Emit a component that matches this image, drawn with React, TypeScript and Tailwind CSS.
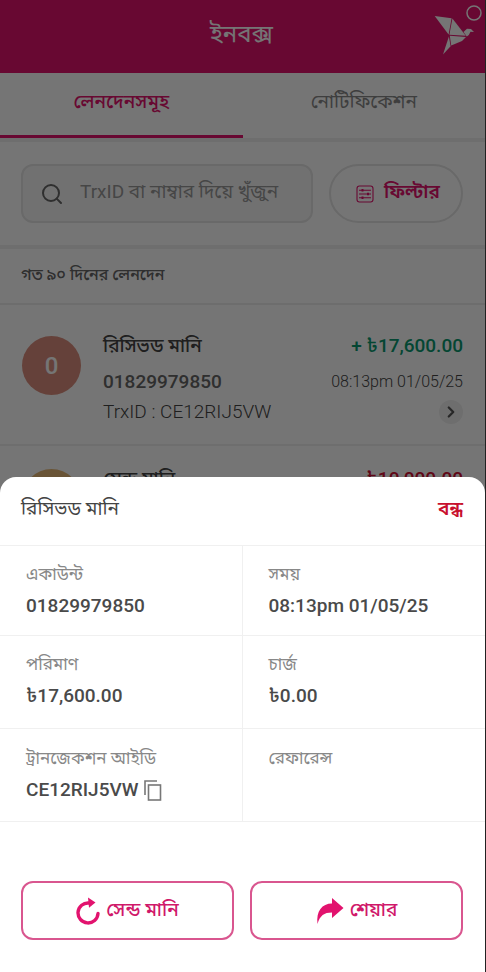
import { Search, ChevronRight } from "lucide-react";
import type { ReactNode } from "react";

function BirdLogo() {
  return (
    <svg viewBox="434 2 50 54" className="h-[54px] w-[50px]" fill="#fff" aria-hidden="true">
      <path d="M434.7 16 L451.6 18.2 L448.6 34.6 Z" />
      <path d="M452.4 18.5 L465.8 35.8 L449.4 34.8 Z" />
      <path d="M449.8 35.8 L466 37 L462 41 L451.2 45.6 Z" />
      <path d="M448.9 36.5 L450.6 46.2 L443 54.5 Z" />
      <path d="M463.5 32 L467 28.8 L471 29 L474 32 L470.5 31.8 L468.8 35 L466.8 36.6 Z" />
      <circle cx="474" cy="13" r="7" fill="none" stroke="#fff" strokeWidth="1.5" />
    </svg>
  );
}

function FilterIcon() {
  return (
    <svg viewBox="0 0 18 18" className="h-[18px] w-[18px]" fill="none" stroke="#E2136E" strokeWidth="1.1" aria-hidden="true">
      <rect x="1" y="1" width="16" height="16" rx="2.5" />
      <path d="M3 5.2h12M3 9h12M3 12.8h12" />
      <path d="M6.5 4v2.4M12 7.8v2.4M6.5 11.6v2.4" strokeWidth="2" />
    </svg>
  );
}

function RedoIcon() {
  return (
    <svg viewBox="0 0 24 28" className="h-7 w-6" aria-hidden="true">
      <path d="M13 6 A10 10 0 1 0 22 16.5" fill="none" stroke="#E2136E" strokeWidth="3.4" strokeLinecap="round" />
      <path d="M12 0.5 L19.5 5.4 L13 10.8 Z" fill="#E2136E" />
    </svg>
  );
}

function ShareIcon() {
  return (
    <svg viewBox="0 0 28 28" className="h-7 w-7" aria-hidden="true">
      <path d="M16 1 L27.5 11 L16 21 V15.5 C8 15.5 4 18.5 1.5 27 C0 14 6 6.5 16 6.5 Z" fill="#E2136E" />
    </svg>
  );
}

function CopyIcon() {
  return (
    <svg viewBox="0 0 18 21" className="h-[21px] w-[18px]" fill="none" stroke="#777" strokeWidth="1.6" aria-hidden="true">
      <path d="M1 15 V1 H13" />
      <rect x="4.5" y="5" width="12" height="15" />
    </svg>
  );
}

function Field({ label, children, className }: { label: string; children?: ReactNode; className: string }) {
  return (
    <div className={`border-b border-[#f0f0f0] px-[26px] ${className}`}>
      <dt className="text-[17px] leading-6 text-[#888]">{label}</dt>
      <dd className="mt-1 flex h-8 items-center text-[19px] font-medium text-[#4a4a4a]">{children}</dd>
    </div>
  );
}

function Action({ icon, label }: { icon: ReactNode; label: string }) {
  return (
    <button
      type="button"
      className="flex h-[59px] flex-1 items-center justify-center gap-1.5 rounded-xl border-2 border-[#d9568f] text-[19px] font-medium text-[#d0186a]"
    >
      {icon}
      {label}
    </button>
  );
}

export default function App() {
  return (
    <div className="relative h-screen overflow-hidden border-r border-[#222] bg-white font-[Roboto,'Noto_Sans_Bengali','Noto_Sans',sans-serif]">
      <header className="relative flex h-[73px] items-center justify-center bg-[#E2136E]">
        <h1 className="pr-0.5 pb-1.5 text-2xl text-white">ইনবক্স</h1>
        <div className="absolute top-0.5 right-px">
          <BirdLogo />
        </div>
      </header>

      <nav className="flex h-[69px] border-b-4 border-[#f0f0f0]">
        <button type="button" className="flex-1 border-b-[3px] border-[#E2136E] pb-1 text-[19px] font-medium text-[#E2136E]">
          লেনদেনসমূহ
        </button>
        <button type="button" className="flex-1 pb-1.5 text-[19px] text-[#888]">
          নোটিফিকেশন
        </button>
      </nav>

      <div className="flex gap-4 border-b-4 border-[#f0f0f0] py-[22px] pr-[22px] pl-[21px]">
        <label className="flex h-[59px] min-w-0 flex-1 items-center gap-4 rounded-xl border-2 border-[#e4e4e4] bg-[#f7f7f7] px-[17px]">
          <Search className="h-6 w-6 shrink-0 text-[#666]" strokeWidth={2} />
          <input
            type="text"
            aria-label="TrxID"
            placeholder="TrxID বা নাম্বার দিয়ে খুঁজুন"
            className="w-full min-w-0 bg-transparent pb-0.5 text-[19px] outline-none placeholder:text-[#999]"
          />
        </label>
        <button
          type="button"
          className="flex h-[59px] w-[134px] items-center justify-center gap-2.5 rounded-full border-2 border-[#e4e4e4] pl-1 text-[19px] font-semibold text-[#E2136E]"
        >
          <FilterIcon />
          <span className="pb-0.5">ফিল্টার</span>
        </button>
      </div>

      <h2 className="flex h-14 items-center border-b-2 border-[#eee] px-[21px] pb-0.5 text-base font-medium text-[#666]">
        গত ৯০ দিনের লেনদেন
      </h2>

      <ul className="pt-2">
        <li className="flex h-[133px] gap-[22px] border-b-2 border-[#f0f0f0] px-[22px] pt-[19px]">
          <div className="mt-1 flex h-[59px] w-[59px] items-center justify-center rounded-full bg-[#dc8f7e] text-2xl font-medium text-white">0</div>
          <div className="flex-1">
            <div className="flex justify-between text-[19px] leading-7 font-medium">
              <span className="text-[#444]">রিসিভড মানি</span>
              <span className="text-[#0a9a70]">+ ৳17,600.00</span>
            </div>
            <div className="mt-2 flex items-center justify-between leading-7">
              <span className="text-[19px] leading-7 font-medium text-[#666]">01829979850</span>
              <span className="text-base font-light text-[#444]">08:13pm 01/05/25</span>
            </div>
            <div className="mt-0.5 flex items-center justify-between">
              <span className="text-[19px] leading-7 font-light text-[#444]">TrxID : CE12RIJ5VW</span>
              <button type="button" aria-label="বিস্তারিত" className="flex h-6 w-6 items-center justify-center rounded-full bg-[#f0f0f0] text-[#555]">
                <ChevronRight className="h-[18px] w-[18px]" strokeWidth={3} />
              </button>
            </div>
          </div>
        </li>
        <li className="flex gap-[22px] px-[22px] pt-[19px]">
          <div className="mt-1 h-[59px] w-[59px] rounded-full bg-[#e5b877]" />
          <div className="flex flex-1 justify-between text-[19px] leading-7 font-medium">
            <span className="text-[#444]">সেন্ড মানি</span>
            <span className="text-[#d01032]">৳10,000.00</span>
          </div>
        </li>
      </ul>

      <div className="absolute inset-0 flex flex-col justify-end bg-black/54">
        <section role="dialog" aria-labelledby="sheet-title" className="rounded-t-2xl bg-white">
          <div className="flex h-[68px] items-center justify-between pr-[22px] pb-1 pl-[21px] text-[19px]">
            <h2 id="sheet-title" className="text-[#444]">রিসিভড মানি</h2>
            <button type="button" className="font-semibold text-[#c8102e]">বন্ধ</button>
          </div>
          <dl className="grid grid-cols-2 border-t border-[#f0f0f0]">
            <Field label="একাউন্ট" className="h-[90px] border-r pt-4">01829979850</Field>
            <Field label="সময়" className="h-[90px] pt-4">08:13pm 01/05/25</Field>
            <Field label="পরিমাণ" className="h-[93px] border-r pt-4">৳17,600.00</Field>
            <Field label="চার্জ" className="h-[93px] pt-4">৳0.00</Field>
            <Field label="ট্রানজেকশন আইডি" className="h-[93px] border-r pt-[17px]">
              CE12RIJ5VW
              <button type="button" aria-label="কপি" className="ml-1.5">
                <CopyIcon />
              </button>
            </Field>
            <Field label="রেফারেন্স" className="h-[93px] pt-[17px]" />
          </dl>
          <div className="flex gap-4 pt-[59px] pr-[22px] pb-8 pl-[21px]">
            <Action icon={<RedoIcon />} label="সেন্ড মানি" />
            <Action icon={<ShareIcon />} label="শেয়ার" />
          </div>
        </section>
      </div>
    </div>
  );
}
